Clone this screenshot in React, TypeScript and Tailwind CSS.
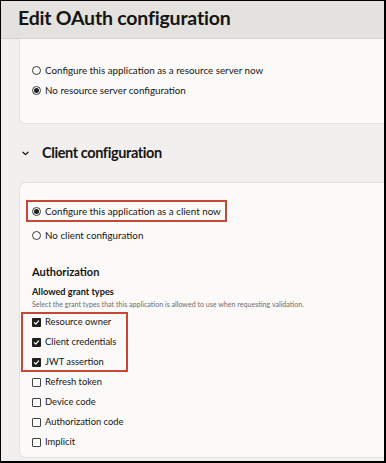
import React from "react";

const font = { fontFamily: 'Lato, "Liberation Sans", sans-serif' };

function Radio({ checked }: { checked?: boolean }) {
  return (
    <span className="flex h-[9px] w-[9px] shrink-0 items-center justify-center rounded-full border border-[#3d3b38] bg-white">
      {checked && <span className="h-[5px] w-[5px] rounded-full bg-[#1f1e1c]" />}
    </span>
  );
}

function Check({ checked }: { checked?: boolean }) {
  if (checked) {
    return (
      <span className="flex h-[9px] w-[9px] shrink-0 items-center justify-center rounded-[1px] bg-[#1f1e1c]">
        <svg width="7" height="7" viewBox="0 0 8 8" fill="none" stroke="white" strokeWidth="1.4" strokeLinecap="round" strokeLinejoin="round">
          <polyline points="1.6 4.2 3.2 5.8 6.4 2.2" />
        </svg>
      </span>
    );
  }
  return <span className="h-[9px] w-[9px] shrink-0 rounded-[1px] border border-[#45433f] bg-white" />;
}

function Row({ children, label, size = "text-[9.8px]" }: { children: React.ReactNode; label: string; size?: string }) {
  return (
    <div className={`flex h-[20px] items-center gap-[4px] whitespace-nowrap ${size} text-[#161513]`}>
      {children}
      <span>{label}</span>
    </div>
  );
}

export default function App() {
  const grants = [
    { label: "Resource owner", checked: true },
    { label: "Client credentials", checked: true },
    { label: "JWT assertion", checked: true },
  ];
  const others = ["Refresh token", "Device code", "Authorization code", "Implicit"];

  return (
    <div style={font} className="h-[463px] w-[386px] overflow-hidden border-t border-l border-r-2 border-b-2 border-black bg-[#f1f0ee]">
      {/* header */}
      <div className="flex h-[38px] items-center border-b border-[#d3d2cf] bg-[#e3e2df] pb-[4px] pl-[17px]">
        <h1 className="text-[19.5px] font-bold tracking-[-0.2px] text-[#161513]">Edit OAuth configuration</h1>
      </div>

      <div className="pl-[18px]">
        {/* resource server card */}
        <div className="h-[85px] rounded-bl-md border-b border-l border-[#e2e1de] bg-[#fbfaf9] pl-[12px] pt-[21px]">
          <Row label="Configure this application as a resource server now">
            <Radio />
          </Row>
          <Row label="No resource server configuration">
            <Radio checked />
          </Row>
        </div>

        {/* section heading */}
        <div className="flex h-[58px] items-center gap-[13px] pl-[3px]">
          <svg width="7" height="5" viewBox="0 0 7 5" fill="none" stroke="#161513" strokeWidth="1.3" strokeLinecap="round" strokeLinejoin="round">
            <polyline points="1 1.2 3.5 3.6 6 1.2" />
          </svg>
          <h2 className="text-[14.5px] font-bold tracking-[-0.4px] text-[#161513]">Client configuration</h2>
        </div>

        {/* client card */}
        <div className="rounded-l-md border-t border-b border-l border-[#e2e1de] bg-[#fbfaf9] pb-[5px] pl-[12px] pt-[17px]">
          <div className="-ml-[6px] flex h-[22px] w-[201px] items-center gap-[4px] whitespace-nowrap border-2 border-[#c74634] pl-[4px] text-[9.8px] text-[#161513]">
            <Radio checked />
            <span>Configure this application as a client now</span>
          </div>
          <div className="mt-[3px]">
            <Row label="No client configuration">
              <Radio />
            </Row>
          </div>

          <h3 className="mt-[17px] flex h-[20px] items-center text-[11px] font-bold text-[#161513]">Authorization</h3>
          <h4 className="mt-[3px] flex h-[14px] items-center text-[9.2px] font-bold text-[#161513]">Allowed grant types</h4>
          <p className="flex h-[13px] items-center whitespace-nowrap text-[7.1px] text-[#6f6c69]">
            Select the grant types that this application is allowed to use when requesting validation.
          </p>

          <div className="relative">
            {grants.map((g) => (
              <Row key={g.label} label={g.label} size="text-[9.4px]">
                <Check checked={g.checked} />
              </Row>
            ))}
            <div className="pointer-events-none absolute -left-[11px] top-0 h-[60px] w-[107px] border-2 border-[#c74634]" />
          </div>
          {others.map((o) => (
            <Row key={o} label={o} size="text-[9.4px]">
              <Check />
            </Row>
          ))}
        </div>
      </div>
    </div>
  );
}
